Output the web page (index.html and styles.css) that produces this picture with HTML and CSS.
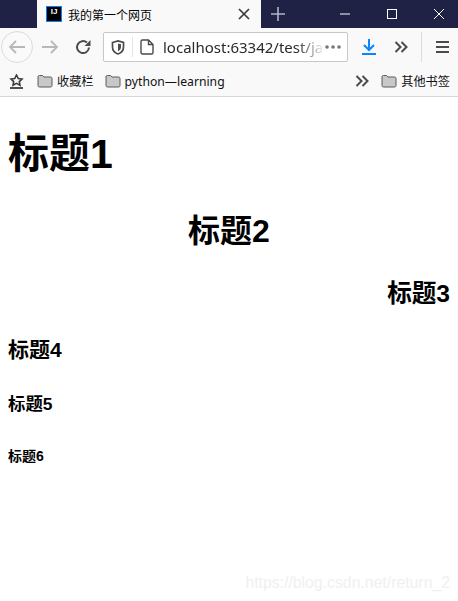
FILE: index.html
```html
<!DOCTYPE html>
<html>
<head>
    <meta charset="utf-8" />
    <title>我的第一个网页</title>
    <link rel="stylesheet" href="styles.css">
</head>
<body>
    <div id="tabbar">
        <div id="tab">
            <span id="favicon">IJ</span>
            <span id="tab-title">我的第一个网页</span>
            <svg id="tab-close" width="12" height="12" viewBox="0 0 12 12"><path d="M1 1l10 10M11 1L1 11" stroke="#3c3c40" stroke-width="1.7" fill="none"/></svg>
        </div>
        <svg id="new-tab" width="14" height="14" viewBox="0 0 14 14"><path d="M7 0v14M0 7h14" stroke="#b4b6c4" stroke-width="1.6" fill="none"/></svg>
        <div id="window-buttons">
            <svg class="win-btn" width="10" height="10" viewBox="0 0 10 10"><path d="M0 5h10" stroke="#fff" fill="none"/></svg>
            <svg class="win-btn" width="10" height="10" viewBox="0 0 10 10"><rect x=".5" y=".5" width="9" height="9" stroke="#fff" fill="none"/></svg>
            <svg class="win-btn" width="10" height="10" viewBox="0 0 10 10"><path d="M0 0l10 10M10 0L0 10" stroke="#fff" fill="none"/></svg>
        </div>
    </div>

    <div id="toolbar">
        <div id="back">
            <svg width="16" height="14" viewBox="0 0 16 14"><path d="M7 1L1 7l6 6M1 7h15" stroke="#b8b8ba" stroke-width="1.8" fill="none"/></svg>
        </div>
        <svg id="forward" width="16" height="14" viewBox="0 0 16 14"><path d="M9 1l6 6-6 6M15 7H0" stroke="#b8b8ba" stroke-width="1.8" fill="none"/></svg>
        <svg id="reload" width="16" height="16" viewBox="0 0 16 16"><path d="M14 8.5A6 6 0 1 1 12 3.6" stroke="#4a4a4f" stroke-width="2" fill="none"/><path d="M15.5 1v6h-6z" fill="#4a4a4f"/></svg>
        <div id="urlbar">
            <svg id="shield" width="14" height="15" viewBox="0 0 14 15"><path d="M1.5 2.5L7 1l5.500 1.500V7c0 3.500-2.500 6-5.500 7-3-1-5.500-3.500-5.500-7z" stroke="#4a4a4f" stroke-width="1.700" fill="none"/><path d="M7 3.500l3 .8V7c0 2-1.300 3.500-3 4.300z" fill="#4a4a4f"/></svg>
            <span id="url-sep"></span>
            <svg id="page-icon" width="14" height="16" viewBox="0 0 14 16"><path d="M2.500 1H8.500L13 5.500V13.500a1.500 1.500 0 0 1-1.500 1.500h-9A1.500 1.500 0 0 1 1 13.500V2.500A1.500 1.500 0 0 1 2.500 1zM8.500 1v4.500H13" stroke="#4a4a4f" stroke-width="1.400" fill="none"/></svg>
            <span id="url-text">localhost:63342/test/jav</span>
            <svg id="dots" width="16" height="4" viewBox="0 0 16 4"><circle cx="2" cy="2" r="1.800" fill="#77777a"/><circle cx="8" cy="2" r="1.800" fill="#77777a"/><circle cx="14" cy="2" r="1.800" fill="#77777a"/></svg>
        </div>
        <svg id="download" width="14" height="16" viewBox="0 0 14 16"><path d="M7 0v10M2 6l5 5 5-5" stroke="#0a84ff" stroke-width="2" fill="none"/><path d="M0 15h14" stroke="#0a84ff" stroke-width="2" fill="none"/></svg>
        <svg id="more-tools" width="14" height="12" viewBox="0 0 14 12"><path d="M1.500 1l5 5-5 5M7.500 1l5 5-5 5" stroke="#4a4a4f" stroke-width="2" fill="none"/></svg>
        <span id="toolbar-sep"></span>
        <svg id="menu" width="13" height="12" viewBox="0 0 13 12"><path d="M0 1h13M0 6h13M0 11h13" stroke="#4a4a4f" stroke-width="2" fill="none"/></svg>
    </div>

    <div id="bookmarks">
        <svg id="bm-star" width="15" height="15" viewBox="0 0 15 15"><path d="M7.500 1l1.800 3.500 3.700.5-2.700 2.600.7 3.600-3.500-1.800-3.500 1.800.7-3.600L2 5l3.700-.5z" stroke="#3c3c40" stroke-width="1.600" fill="none"/><path d="M1 14h13" stroke="#3c3c40" stroke-width="1.800" fill="none"/></svg>
        <div class="bookmark">
            <svg class="folder" width="16" height="14" viewBox="0 0 16 14"><path d="M1 3a1.500 1.500 0 0 1 1.500-1.500h3L7 3h6.500A1.500 1.500 0 0 1 15 4.500v7a1.500 1.500 0 0 1-1.500 1.500h-11A1.500 1.500 0 0 1 1 11.500z" fill="#c8c8c8" stroke="#5a5a5e"/></svg>
            <span>收藏栏</span>
        </div>
        <div class="bookmark">
            <svg class="folder" width="16" height="14" viewBox="0 0 16 14"><path d="M1 3a1.500 1.500 0 0 1 1.500-1.500h3L7 3h6.500A1.500 1.500 0 0 1 15 4.500v7a1.500 1.500 0 0 1-1.500 1.500h-11A1.500 1.500 0 0 1 1 11.500z" fill="#c8c8c8" stroke="#5a5a5e"/></svg>
            <span>python—learning</span>
        </div>
        <svg id="bm-more" width="14" height="12" viewBox="0 0 14 12"><path d="M1.500 1l5 5-5 5M7.500 1l5 5-5 5" stroke="#4a4a4f" stroke-width="2" fill="none"/></svg>
        <div class="bookmark">
            <svg class="folder" width="16" height="14" viewBox="0 0 16 14"><path d="M1 3a1.500 1.500 0 0 1 1.500-1.500h3L7 3h6.500A1.500 1.500 0 0 1 15 4.500v7a1.500 1.500 0 0 1-1.500 1.500h-11A1.500 1.500 0 0 1 1 11.500z" fill="#c8c8c8" stroke="#5a5a5e"/></svg>
            <span>其他书签</span>
        </div>
    </div>

    <div id="content">
        <h1>标题1</h1>
        <h2>标题2</h2>
        <h3>标题3</h3>
        <h4>标题4</h4>
        <h5>标题5</h5>
        <h6>标题6</h6>
    </div>

    <div id="watermark">https://blog.csdn.net/return_2</div>
</body>
</html>
```

FILE: styles.css
```css
html, body{
    height: 100%;
}
body{
    margin: 0;
    overflow: hidden;
    position: relative;
    background-color: #fff;
    font-family: "Liberation Sans", "Noto Sans CJK SC", sans-serif;
    color: #000;
}
#tabbar{
    height: 28px;
    background-color: #1f2244;
    display: flex;
    align-items: center;
    padding-left: 37px;
}
#tab{
    width: 224px;
    height: 28px;
    background-color: #f9f9fa;
    display: flex;
    align-items: center;
    padding-left: 9px;
    padding-right: 11px;
    box-sizing: border-box;
}
#favicon{
    width: 16px;
    height: 16px;
    box-sizing: border-box;
    background-color: #000;
    border: 1px solid #087cfa;
    color: #fff;
    font-size: 8px;
    font-weight: bold;
    line-height: 10px;
    text-align: center;
}
#tab-title{
    margin-left: 6px;
    font-size: 12px;
    font-family: "Noto Sans CJK SC", sans-serif;
    flex: 1;
}
#new-tab{
    margin-left: 10px;
}
#window-buttons{
    display: flex;
    margin-left: 55px;
    gap: 37px;
}
#toolbar{
    height: 38px;
    background-color: #f9f9fa;
    display: flex;
    align-items: center;
    padding-left: 1px;
}
#back{
    width: 32px;
    height: 32px;
    box-sizing: border-box;
    border: 1px solid #dcdcdc;
    border-radius: 50%;
    background-color: #fafafa;
    display: flex;
    align-items: center;
    justify-content: center;
}
#forward{
    margin-left: 9px;
}
#reload{
    margin-left: 17px;
}
#urlbar{
    width: 245px;
    height: 30px;
    margin-left: 12px;
    box-sizing: border-box;
    background-color: #fff;
    border: 1px solid #c8c8ca;
    border-radius: 2px;
    display: flex;
    align-items: center;
    padding-left: 7px;
}
#url-sep{
    width: 1px;
    height: 20px;
    background-color: #e4e4e6;
    margin-left: 7px;
}
#page-icon{
    margin-left: 7px;
}
#url-text{
    margin-left: 9px;
    width: 162px;
    white-space: nowrap;
    font-size: 15px;
    font-family: "Noto Sans", sans-serif;
    color: #2a2a2e;
    -webkit-mask-image: linear-gradient(to right, #000 82%, transparent 100%);
    mask-image: linear-gradient(to right, #000 82%, transparent 100%);
}
#download{
    margin-left: 14px;
}
#more-tools{
    margin-left: 18px;
}
#toolbar-sep{
    width: 1px;
    height: 30px;
    background-color: #dcdcde;
    margin-left: 13px;
}
#menu{
    margin-left: 14px;
}
#bookmarks{
    height: 30px;
    background-color: #f9f9fa;
    border-bottom: 1px solid #d8d8da;
    display: flex;
    align-items: center;
    padding-left: 9px;
}
.bookmark{
    display: flex;
    align-items: center;
    gap: 4px;
    font-size: 12.2px;
    font-family: "Noto Sans", "Noto Sans CJK SC", sans-serif;
    color: #111;
    white-space: nowrap;
}
.folder{
    flex: none;
}
#bm-star{
    margin-right: 13px;
}
.bookmark + .bookmark{
    margin-left: 11px;
}
#bm-more{
    margin-left: auto;
}
#bm-more + .bookmark{
    margin-left: 12px;
    margin-right: 8px;
}
#content{
    padding: 0 8px;
}
h1, h2, h3, h4, h5, h6{
    margin: 0;
    font-weight: bold;
    line-height: 1.2;
}
h1{
    font-size: 41px;
    margin-top: 33px;
}
h2{
    font-size: 32px;
    margin-top: 33px;
    text-align: center;
}
h3{
    font-size: 24.6px;
    margin-top: 28px;
    text-align: right;
}
h4{
    font-size: 21px;
    margin-top: 29px;
}
h5{
    font-size: 17.4px;
    margin-top: 32px;
}
h6{
    font-size: 14px;
    margin-top: 33px;
}
#watermark{
    position: absolute;
    right: 8px;
    bottom: 9px;
    font-size: 15.8px;
    color: #f0f0f0;
}
```
